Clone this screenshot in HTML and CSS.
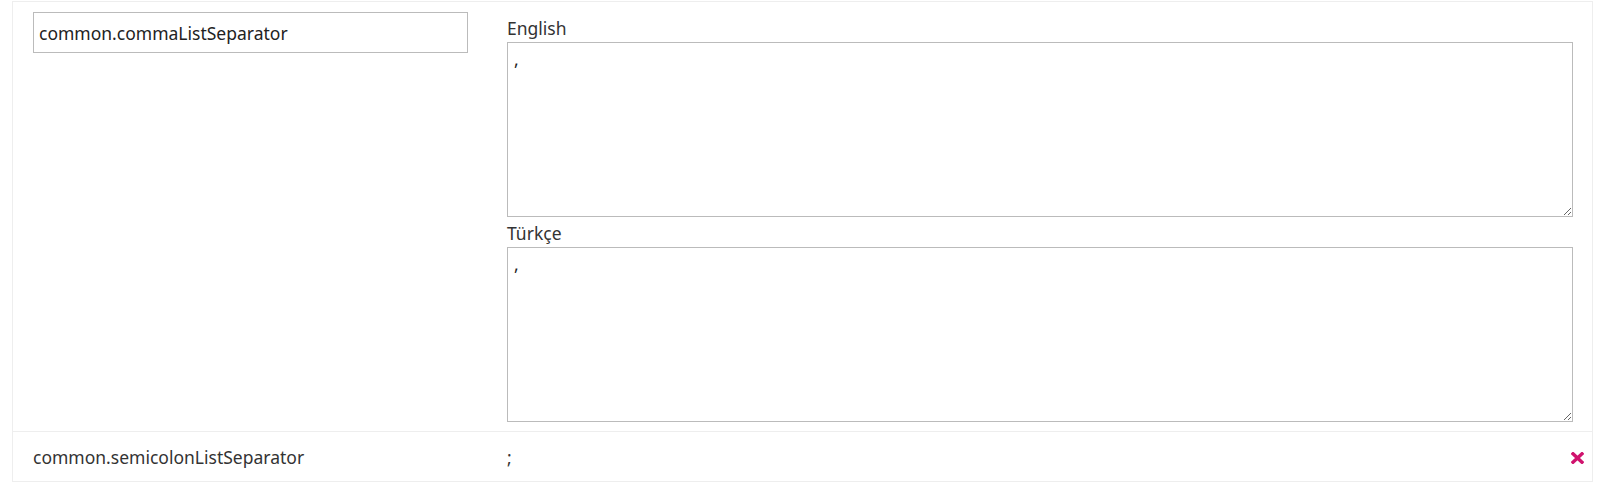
FILE: index.html
```html
<!DOCTYPE html>
<html>
<head>
<meta charset="utf-8">
<link rel="stylesheet" href="styles.css">
</head>
<body>
<div class="list">
  <div class="row row-edit">
    <div class="key-cell">
      <input class="key-input" type="text" value="common.commaListSeparator">
    </div>
    <div class="value-cell">
      <label class="lang-label">English</label>
      <textarea class="lang-text">,</textarea>
      <label class="lang-label">Türkçe</label>
      <textarea class="lang-text">,</textarea>
    </div>
  </div>
  <div class="row row-view">
    <div class="key-cell key-text">common.semicolonListSeparator</div>
    <div class="value-cell value-text">;</div>
    <div class="action-cell">
      <svg class="del-icon" width="13" height="12" viewBox="0 0 13 12" aria-hidden="true">
        <path d="M2 1.8 L11 10.2 M11 1.8 L2 10.2" stroke="currentColor" stroke-width="3.4" stroke-linecap="square" fill="none"/>
      </svg>
    </div>
  </div>
</div>
</body>
</html>
```

FILE: styles.css
```css
html, body {
  margin: 0;
  padding: 0;
  background: #fff;
}

body {
  font-family: "Noto Sans", "Open Sans", sans-serif;
  font-size: 17.5px;
  line-height: 24px;
  color: #333;
}

.list {
  margin: 1px 0 0 12px;
  width: 1581px;
  box-sizing: border-box;
  border-left: 1px solid #eee;
  border-right: 1px solid #eee;
}

.row {
  display: flex;
  align-items: flex-start;
  border-top: 1px solid #eee;
}

.row:last-child {
  border-bottom: 1px solid #eee;
}

.key-cell {
  width: 494px;
  padding-left: 20px;
  box-sizing: border-box;
  flex: none;
}

.row-edit .key-cell {
  padding-top: 10px;
}

.key-input {
  display: block;
  width: 435px;
  height: 41px;
  box-sizing: border-box;
  margin: 0;
  padding: 0 5px;
  border: 1px solid #bbb;
  border-radius: 0;
  font-family: "Noto Sans", "Open Sans", sans-serif;
  font-size: 17.5px;
  color: #222;
  outline: none;
}

.value-cell {
  flex: 1;
  min-width: 0;
}

.row-edit .value-cell {
  padding: 14px 19px 9px 0;
}

.lang-label {
  display: block;
  margin-bottom: 2px;
  color: #333;
}

.lang-text {
  display: block;
  width: 100%;
  height: 175px;
  box-sizing: border-box;
  margin: 0 0 4px;
  padding: 4px 6px;
  border: 1px solid #bbb;
  border-radius: 0;
  font-family: "Noto Sans", "Open Sans", sans-serif;
  font-size: 17.5px;
  line-height: 24px;
  color: #222;
  outline: none;
}

.lang-text:last-child {
  margin-bottom: 0;
}

.row-view {
  align-items: center;
  height: 49px;
}

.row-view .key-cell,
.row-view .value-cell {
  padding-top: 1px;
}

.action-cell {
  flex: none;
  width: 21px;
  display: flex;
  justify-content: flex-start;
  padding-top: 2px;
}

.del-icon {
  display: block;
  color: #d0136e;
}
```
